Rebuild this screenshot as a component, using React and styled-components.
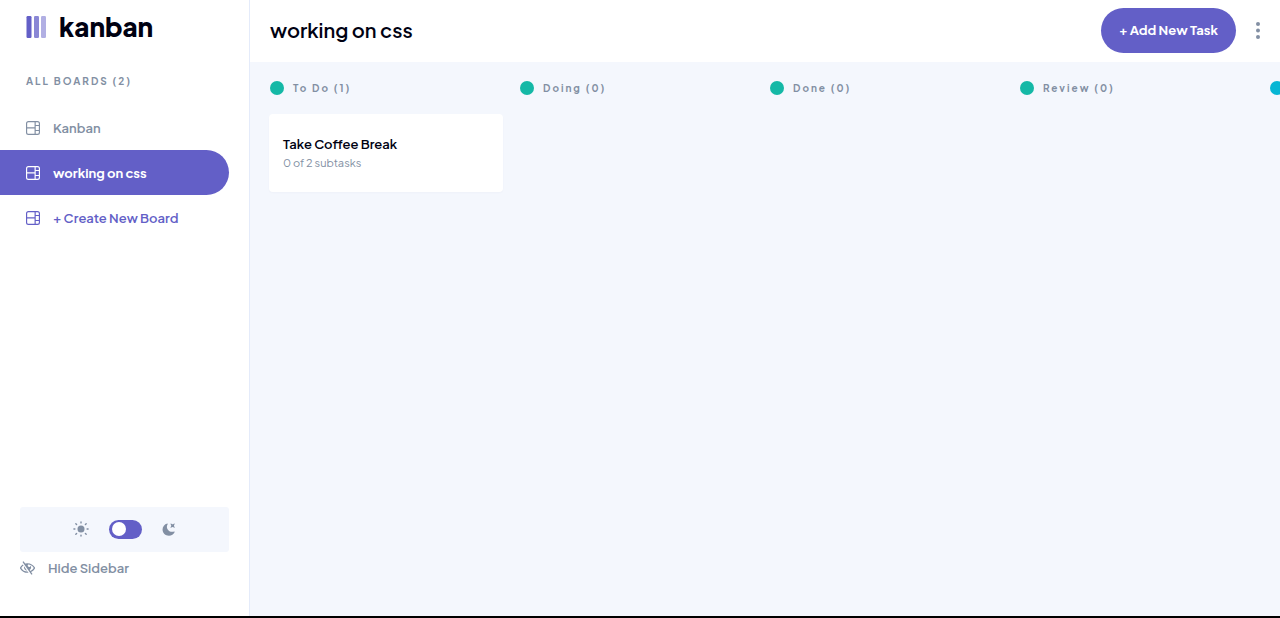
import React, { useState } from "react";
import styled, { createGlobalStyle } from "styled-components";

const purple = "#635fc7";
const slate = "#828fa3";
const ink = "#000112";
const mist = "#f4f7fd";

const GlobalStyle = createGlobalStyle`
  *, *::before, *::after { box-sizing: border-box; }
  body { margin: 0; background: #fff; }
  body, button, input { font-family: "Plus Jakarta Sans", Inter, sans-serif; }
  h1, h2, h3, p, ul { margin: 0; padding: 0; }
  ul { list-style: none; }
  button { border: 0; background: none; padding: 0; cursor: pointer; }
`;

const Shell = styled.div`
  display: flex;
  height: 100vh;
  border-bottom: 2px solid #000;
`;

const Sidebar = styled.aside`
  display: flex;
  flex-direction: column;
  flex: none;
  width: 250px;
  border-right: 1px solid #e4ebfa;
  background: #fff;
`;

const Logo = styled.a`
  display: flex;
  align-items: center;
  gap: 13px;
  height: 54px;
  padding-left: 26px;
  color: ${ink};
  font-size: 26px;
  line-height: 32px;
  font-weight: 800;
  text-decoration: none;
`;

const BoardCount = styled.h2`
  padding: 19px 0 16px 26px;
  color: ${slate};
  font-size: 10px;
  line-height: 16px;
  font-weight: 700;
  letter-spacing: 2px;
`;

const BoardButton = styled.button`
  display: flex;
  align-items: center;
  gap: 13px;
  width: calc(100% - 20px);
  height: 45px;
  padding: 0 0 0 26px;
  border-radius: 0 23px 23px 0;
  background: ${(p) => (p.$active ? purple : "transparent")};
  color: ${(p) => (p.$active ? "#fff" : p.$create ? purple : slate)};
  font-size: 13px;
  line-height: 20px;
  font-weight: ${(p) => (p.$active ? 700 : 600)};
`;

const SidebarFoot = styled.div`
  margin-top: auto;
  padding: 0 20px 36px;
`;

const ThemePanel = styled.div`
  display: flex;
  align-items: center;
  justify-content: center;
  gap: 20px;
  height: 45px;
  padding: 0 1px 1px 0;
  border-radius: 3px;
  background: ${mist};
  color: ${slate};
`;

const Switch = styled.input`
  appearance: none;
  display: flex;
  align-items: center;
  width: 33px;
  height: 19px;
  margin: 0;
  padding: 0 3px;
  border-radius: 10px;
  background: ${purple};
  cursor: pointer;

  &::before {
    content: "";
    width: 14px;
    height: 14px;
    border-radius: 50%;
    background: #fff;
  }
  &:checked { justify-content: flex-end; }
`;

const HideButton = styled.button`
  display: flex;
  align-items: center;
  gap: 13px;
  height: 28px;
  padding-top: 4px;
  color: ${slate};
  font-size: 13px;
  line-height: 20px;
  font-weight: 600;
`;

const Main = styled.main`
  display: flex;
  flex-direction: column;
  flex: 1;
  min-width: 0;
`;

const Header = styled.header`
  display: flex;
  align-items: center;
  height: 62px;
  padding: 0 16px 2px 20px;
  background: #fff;
`;

const Title = styled.h1`
  flex: 1;
  color: ${ink};
  font-size: 20px;
  line-height: 28px;
  font-weight: 600;
`;

const AddButton = styled.button`
  height: 45px;
  padding: 0 18px;
  border-radius: 23px;
  background: ${purple};
  color: #fff;
  font-size: 13px;
  line-height: 20px;
  font-weight: 700;
`;

const MenuButton = styled.button`
  display: flex;
  justify-content: center;
  width: 12px;
  margin-left: 16px;
  color: ${slate};
`;

const Board = styled.div`
  display: flex;
  flex: 1;
  gap: 16px;
  padding: 16px 0 0 19px;
  overflow: auto hidden;
  scrollbar-width: none;
  background: ${mist};
`;

const Column = styled.section`
  flex: none;
  width: 234px;
`;

const ColumnTitle = styled.h2`
  display: flex;
  align-items: center;
  gap: 9px;
  height: 20px;
  margin-bottom: 16px;
  padding-left: 1px;
  color: ${slate};
  font-size: 10px;
  line-height: 16px;
  font-weight: 700;
  letter-spacing: 2px;
`;

const Dot = styled.span`
  width: 14px;
  height: 14px;
  border-radius: 50%;
  background: ${(p) => p.$color};
`;

const Card = styled.article`
  padding: 20px 14px;
  border-radius: 4px;
  background: #fff;
  box-shadow: 0 1px 2px rgba(54, 78, 126, 0.03);
`;

const CardTitle = styled.h3`
  color: ${ink};
  font-size: 13px;
  line-height: 20px;
  font-weight: 600;
`;

const CardMeta = styled.p`
  color: ${slate};
  font-size: 11px;
  line-height: 18px;
`;

const LogoMark = () => (
  <svg width="20" height="22" viewBox="0 0 20 22" fill={purple} aria-hidden="true">
    <rect x=".5" width="5" height="22" rx="1.2" />
    <rect x="8" width="5" height="22" rx="1.2" opacity=".75" />
    <rect x="15" width="5" height="22" rx="1.2" opacity=".5" />
  </svg>
);

const BoardIcon = () => (
  <svg width="14" height="14" viewBox="0 0 16 16" fill="currentColor" aria-hidden="true">
    <path d="M0 2.889A2.889 2.889 0 0 1 2.889 0H13.11A2.889 2.889 0 0 1 16 2.889V13.11A2.888 2.888 0 0 1 13.111 16H2.89A2.889 2.889 0 0 1 0 13.111V2.89Zm1.333 5.555v4.667c0 .859.697 1.556 1.556 1.556h6.889V8.444H1.333Zm8.445-1.333V1.333h-6.89A1.556 1.556 0 0 0 1.334 2.89V7.11h8.445Zm4.889-1.333H11.11v4.444h3.556V5.778Zm0 5.778H11.11v3.11h2a1.556 1.556 0 0 0 1.556-1.555v-1.555Zm0-7.112V2.89a1.555 1.555 0 0 0-1.556-1.556h-2v3.111h3.556Z" />
  </svg>
);

const SunIcon = () => (
  <svg width="16" height="16" viewBox="0 0 16 16" aria-hidden="true">
    <circle cx="8" cy="8" r="3.5" fill="currentColor" />
    <path
      d="M8 .9v1M8 14.1v1M.9 8h1M14.1 8h1M2.8 2.8l.8.8M12.4 12.4l.8.8M13.2 2.8l-.8.8M3.6 12.4l-.8.8"
      stroke="currentColor"
      strokeWidth="1.4"
      strokeLinecap="round"
    />
  </svg>
);

const MoonIcon = () => (
  <svg width="13" height="13" viewBox="0 0 16 16" fill="currentColor" aria-hidden="true">
    <path d="M6.474.682c.434-.11.718.406.481.78A6.067 6.067 0 0 0 6.01 4.72c0 3.418 2.827 6.187 6.314 6.187.89.002 1.77-.182 2.584-.54.408-.18.894.165.724.57-1.16 2.775-3.944 4.73-7.194 4.73-4.292 0-7.771-3.41-7.771-7.615 0-3.541 2.466-6.518 5.807-7.37Zm8.433.07c.442-.294.969.232.674.674l-.525.787a1.943 1.943 0 0 0 0 2.157l.525.788c.295.441-.232.968-.674.673l-.787-.525a1.943 1.943 0 0 0-2.157 0l-.786.525c-.442.295-.97-.232-.675-.673l.525-.788a1.943 1.943 0 0 0 0-2.157l-.525-.787c-.295-.442.232-.968.674-.673l.787.525a1.943 1.943 0 0 0 2.157 0l.787-.525Z" />
  </svg>
);

const HideIcon = () => (
  <svg width="15" height="14" viewBox="0 0 18 16" fill="currentColor" aria-hidden="true">
    <path d="M8.522 11.223a4.252 4.252 0 0 1-3.654-5.22l3.654 5.22ZM9 12.25A8.685 8.685 0 0 1 1.5 8a8.612 8.612 0 0 1 2.76-2.864l-.86-1.23A10.112 10.112 0 0 0 .208 7.238a1.5 1.5 0 0 0 0 1.524A10.187 10.187 0 0 0 9 13.75c.414 0 .828-.025 1.239-.074l-1-1.43A8.88 8.88 0 0 1 9 12.25Zm8.792-3.488a10.14 10.14 0 0 1-4.486 4.046l1.504 2.148a.375.375 0 0 1-.092.523l-.648.453a.375.375 0 0 1-.523-.092L3.19 1.044A.375.375 0 0 1 3.282.52L3.93.068a.375.375 0 0 1 .523.092l1.735 2.479A10.308 10.308 0 0 1 9 2.25c3.746 0 7.031 2 8.792 4.988a1.5 1.5 0 0 1 0 1.524ZM16.5 8a8.674 8.674 0 0 0-6.755-4.219A1.75 1.75 0 1 0 12.75 5v-.001a4.25 4.25 0 0 1-1.154 5.366l.834 1.192A8.641 8.641 0 0 0 16.5 8Z" />
  </svg>
);

const MoreIcon = () => (
  <svg width="4" height="17" viewBox="0 0 4 17" fill="currentColor" aria-hidden="true">
    <circle cx="2" cy="2" r="2" />
    <circle cx="2" cy="8.5" r="2" />
    <circle cx="2" cy="15" r="2" />
  </svg>
);

const boards = ["Kanban", "working on css"];

const columns = [
  { name: "To Do", color: "#14b8a6", tasks: [{ title: "Take Coffee Break", meta: "0 of 2 subtasks" }] },
  { name: "Doing", color: "#14b8a6", tasks: [] },
  { name: "Done", color: "#14b8a6", tasks: [] },
  { name: "Review", color: "#14b8a6", tasks: [] },
  { name: "", color: "#06b6d4", tasks: [] },
];

export default function App() {
  const [active, setActive] = useState("working on css");
  const [dark, setDark] = useState(false);

  return (
    <>
      <GlobalStyle />
      <Shell>
        <Sidebar>
          <Logo href="#">
            <LogoMark />
            kanban
          </Logo>
          <BoardCount>ALL BOARDS ({boards.length})</BoardCount>
          <nav>
            <ul>
              {boards.map((name) => (
                <li key={name}>
                  <BoardButton $active={name === active} onClick={() => setActive(name)}>
                    <BoardIcon />
                    {name}
                  </BoardButton>
                </li>
              ))}
              <li>
                <BoardButton $create>
                  <BoardIcon />+ Create New Board
                </BoardButton>
              </li>
            </ul>
          </nav>
          <SidebarFoot>
            <ThemePanel>
              <SunIcon />
              <Switch
                type="checkbox"
                role="switch"
                aria-label="Dark theme"
                checked={dark}
                onChange={(e) => setDark(e.target.checked)}
              />
              <MoonIcon />
            </ThemePanel>
            <HideButton>
              <HideIcon />
              Hide Sidebar
            </HideButton>
          </SidebarFoot>
        </Sidebar>
        <Main>
          <Header>
            <Title>{active}</Title>
            <AddButton>+ Add New Task</AddButton>
            <MenuButton aria-label="Board options">
              <MoreIcon />
            </MenuButton>
          </Header>
          <Board>
            {columns.map((col, i) => (
              <Column key={i}>
                <ColumnTitle>
                  <Dot $color={col.color} />
                  {col.name && `${col.name} (${col.tasks.length})`}
                </ColumnTitle>
                {col.tasks.map((task) => (
                  <Card key={task.title}>
                    <CardTitle>{task.title}</CardTitle>
                    <CardMeta>{task.meta}</CardMeta>
                  </Card>
                ))}
              </Column>
            ))}
          </Board>
        </Main>
      </Shell>
    </>
  );
}
